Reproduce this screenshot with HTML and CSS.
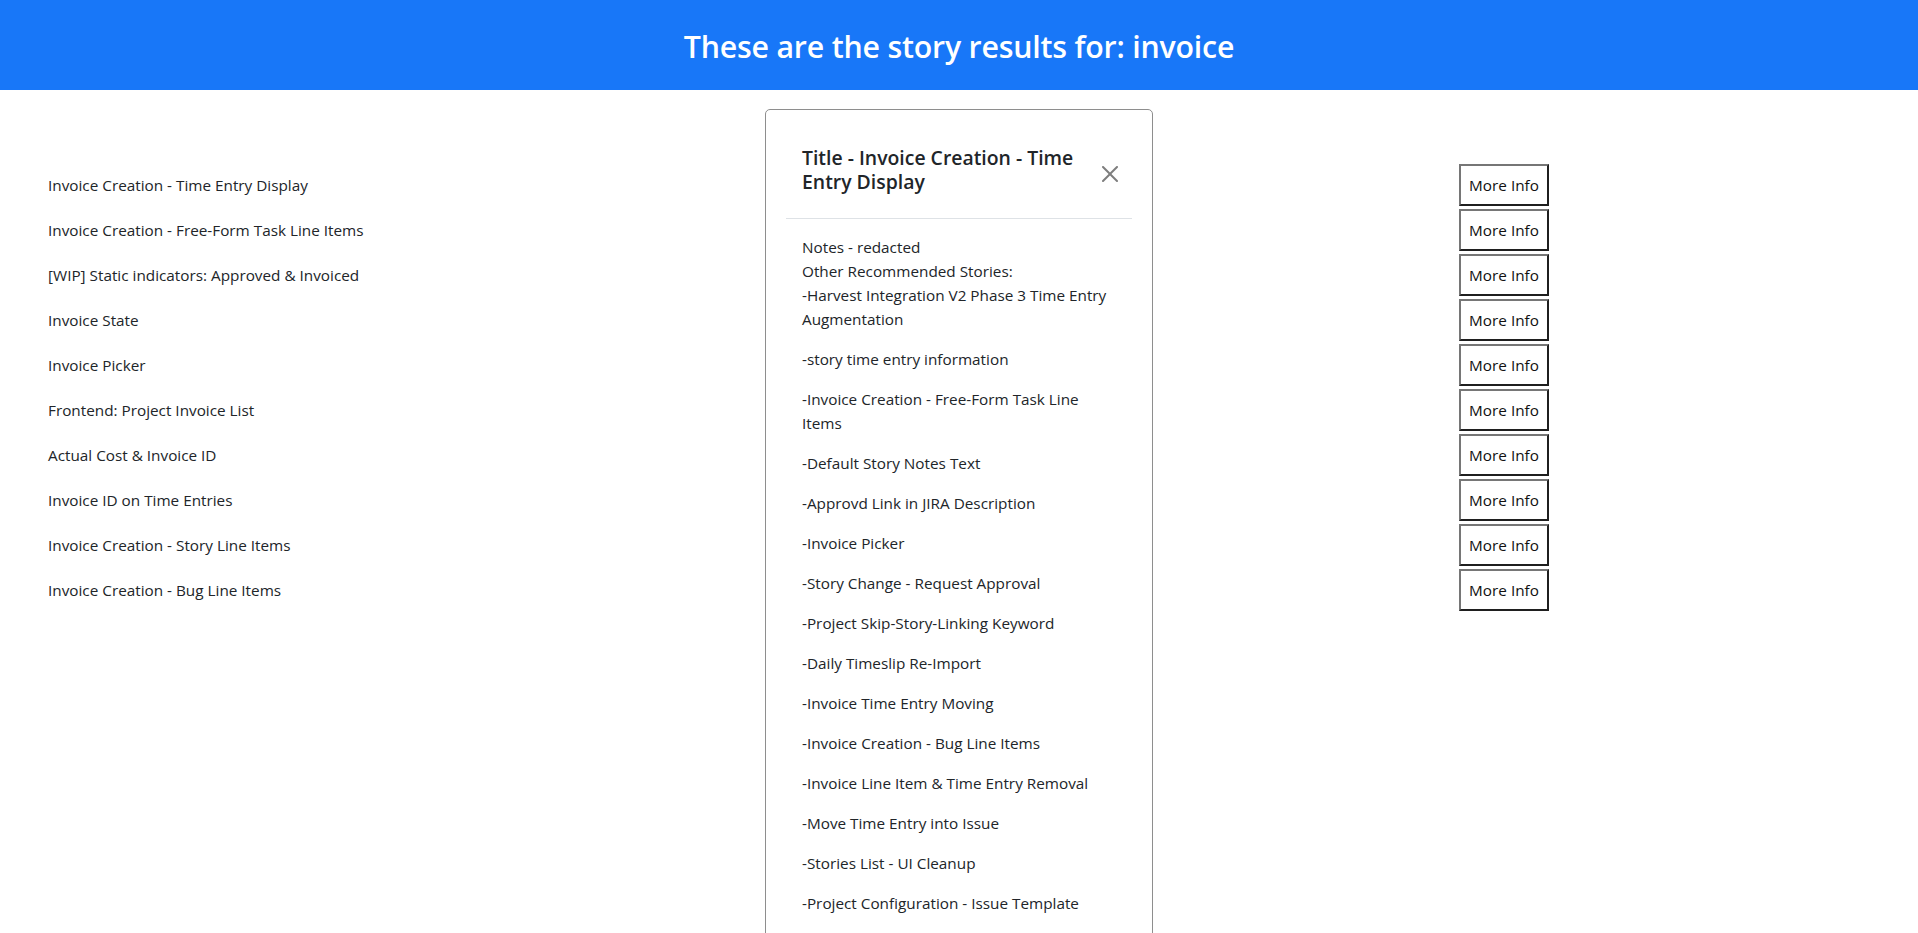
FILE: index.html
```html
<!DOCTYPE html>
<html lang="en">
<head>
<meta charset="utf-8">
<title>Story results</title>
<link rel="stylesheet" href="styles.css">
</head>
<body>
<header class="banner">
  <h1 class="banner-title">These are the story results for: invoice</h1>
</header>
<main class="results">
  <ul class="story-list">
    <li class="story-row"><span class="story-name">Invoice Creation - Time Entry Display</span><button class="more-btn">More Info</button></li>
    <li class="story-row"><span class="story-name">Invoice Creation - Free-Form Task Line Items</span><button class="more-btn">More Info</button></li>
    <li class="story-row"><span class="story-name">[WIP] Static indicators: Approved &amp; Invoiced</span><button class="more-btn">More Info</button></li>
    <li class="story-row"><span class="story-name">Invoice State</span><button class="more-btn">More Info</button></li>
    <li class="story-row"><span class="story-name">Invoice Picker</span><button class="more-btn">More Info</button></li>
    <li class="story-row"><span class="story-name">Frontend: Project Invoice List</span><button class="more-btn">More Info</button></li>
    <li class="story-row"><span class="story-name">Actual Cost &amp; Invoice ID</span><button class="more-btn">More Info</button></li>
    <li class="story-row"><span class="story-name">Invoice ID on Time Entries</span><button class="more-btn">More Info</button></li>
    <li class="story-row"><span class="story-name">Invoice Creation - Story Line Items</span><button class="more-btn">More Info</button></li>
    <li class="story-row"><span class="story-name">Invoice Creation - Bug Line Items</span><button class="more-btn">More Info</button></li>
  </ul>

  <section class="detail-card">
    <div class="detail-header">
      <h5 class="detail-title">Title - Invoice Creation - Time Entry Display</h5>
      <button class="close-btn" aria-label="Close">
        <svg viewBox="0 0 16 16" width="16" height="16"><path d="M.293.293a1 1 0 0 1 1.414 0L8 6.586 14.293.293a1 1 0 1 1 1.414 1.414L9.414 8l6.293 6.293a1 1 0 0 1-1.414 1.414L8 9.414l-6.293 6.293a1 1 0 0 1-1.414-1.414L6.586 8 .293 1.707a1 1 0 0 1 0-1.414z"/></svg>
      </button>
    </div>
    <div class="detail-body">
      <p>Notes - redacted<br>Other Recommended Stories:<br>-Harvest Integration V2 Phase 3 Time Entry Augmentation</p>
      <p>-story time entry information</p>
      <p>-Invoice Creation - Free-Form Task Line Items</p>
      <p>-Default Story Notes Text</p>
      <p>-Approvd Link in JIRA Description</p>
      <p>-Invoice Picker</p>
      <p>-Story Change - Request Approval</p>
      <p>-Project Skip-Story-Linking Keyword</p>
      <p>-Daily Timeslip Re-Import</p>
      <p>-Invoice Time Entry Moving</p>
      <p>-Invoice Creation - Bug Line Items</p>
      <p>-Invoice Line Item &amp; Time Entry Removal</p>
      <p>-Move Time Entry into Issue</p>
      <p>-Stories List - UI Cleanup</p>
      <p>-Project Configuration - Issue Template</p>
    </div>
  </section>
</main>
</body>
</html>
```

FILE: styles.css
```css
* { box-sizing: border-box; }

html, body {
  margin: 0;
  padding: 0;
}

body {
  font-family: "Open Sans", "Noto Sans", "Liberation Sans", sans-serif;
  font-size: 15.3px;
  line-height: 24px;
  color: #212529;
  background: #fff;
}

.banner {
  height: 90px;
  background: #1877f8;
  display: flex;
  align-items: center;
  justify-content: center;
  padding-top: 4px;
}

.banner-title {
  margin: 0;
  color: #fff;
  font-size: 30.3px;
  font-weight: 600;
  line-height: 1.2;
  letter-spacing: -0.2px;
}

.results {
  display: grid;
  grid-template-columns: 1fr;
  align-items: start;
}

.story-list {
  grid-area: 1 / 1;
  list-style: none;
  margin: 0;
  padding: 72px 0 0 48px;
  display: grid;
  grid-template-columns: 1411px 90px;
  grid-auto-rows: 45px;
}

.story-row {
  display: contents;
}

.story-name {
  align-self: center;
}

.more-btn {
  align-self: center;
  height: 42px;
  width: 90px;
  padding: 7px 8px;
  font: inherit;
  color: #111;
  background: #fff;
  border-style: solid;
  border-width: 2px;
  border-color: #767676 #1f1f1f #1f1f1f #767676;
  line-height: 24px;
}

.detail-card {
  grid-area: 1 / 1;
  justify-self: center;
  margin-top: 19px;
  width: 388px;
  padding: 20px;
  background: #fff;
  border: 1px solid #8e8e8e;
  border-radius: 5px;
}

.detail-header {
  display: flex;
  align-items: center;
  padding: 16px;
  border-bottom: 1px solid #dee2e6;
}

.detail-title {
  margin: 0 0 8px 0;
  font-size: 19.4px;
  font-weight: 600;
  line-height: 24px;
}

.close-btn {
  flex: none;
  width: 24px;
  height: 24px;
  padding: 4px;
  margin: -8px -6px -8px auto;
  border: 0;
  background: transparent;
  display: flex;
  align-items: center;
  justify-content: center;
}

.close-btn svg {
  fill: #000;
  opacity: 0.5;
  width: 16px;
  height: 16px;
}

.detail-body {
  padding: 16px 20px 16px 16px;
}

.detail-body p {
  margin: 0 0 16px 0;
}
```
